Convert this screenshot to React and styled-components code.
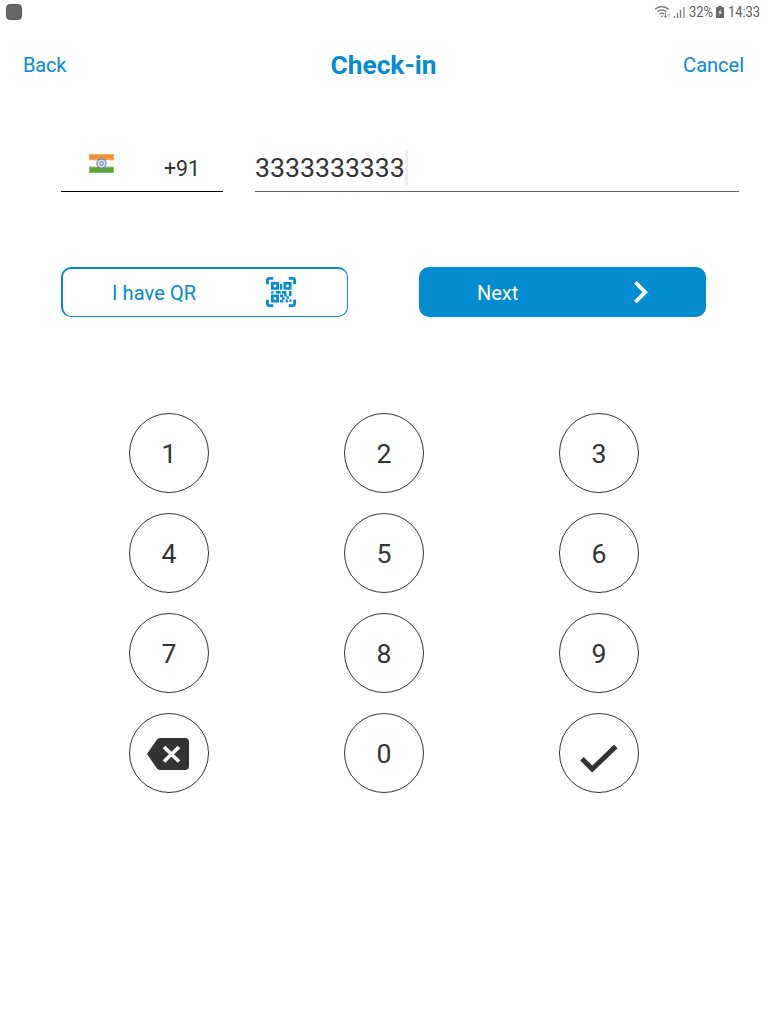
import React from "react";
import styled, { createGlobalStyle } from "styled-components";

const BLUE = "#038cd1";
const INK = "#333333";

const Global = createGlobalStyle`
  *, *::before, *::after { box-sizing: border-box; }
  body { margin: 0; background: #fff; font-family: Roboto, "Liberation Sans", sans-serif; }
  button { font: inherit; background: none; border: 0; padding: 0; margin: 0; }
  svg { display: block; flex: none; }
`;

const Screen = styled.div`
  width: 768px;
  height: 1024px;
  background: #fff;
  overflow: hidden;
`;

const StatusBar = styled.div`
  height: 24px;
  padding: 0 8px 0 6px;
  display: flex;
  align-items: center;
  justify-content: space-between;
`;

const AppBadge = styled.div`
  width: 16px;
  height: 16px;
  border-radius: 4px;
  background: #666;
  border: 1px solid #5a5a5a;
`;

const StatusItems = styled.div`
  display: flex;
  align-items: center;
  height: 24px;
`;

const StatusText = styled.span`
  width: ${(p) => p.$width}px;
  font-size: 15px;
  line-height: 24px;
  color: #5c5c5c;
  white-space: nowrap;
  transform: scaleX(0.86);
  transform-origin: 0 50%;
`;

const Header = styled.header`
  height: 82px;
  padding: 0 24px 0 23px;
  display: grid;
  grid-template-columns: 1fr auto 1fr;
  align-items: center;
  color: ${BLUE};
`;

const HeaderLink = styled.button`
  color: ${BLUE};
  font-size: 20px;
  line-height: 24px;
  letter-spacing: ${(p) => p.$tracking || 0}px;
  justify-self: ${(p) => p.$side};
`;

const Title = styled.h1`
  margin: 0;
  font-size: 26.3px;
  line-height: 30px;
  font-weight: 700;
`;

const PhoneRow = styled.div`
  margin: 40px 29px 0 61px;
  height: 46px;
  display: flex;
  gap: 32px;
  color: ${INK};
`;

const CountryField = styled.div`
  width: 162px;
  display: flex;
  align-items: flex-start;
  border-bottom: 1px solid #000;
  padding: 8px 0 0 28px;
`;

const CountryCode = styled.span`
  margin: 3px 0 0 50px;
  font-size: 21.33px;
  line-height: 24px;
`;

const NumberField = styled.div`
  flex: 1;
  display: flex;
  align-items: flex-start;
  border-bottom: 1px solid #666;
  padding-top: 3px;
`;

const NumberText = styled.span`
  font-size: 26.67px;
  line-height: 38px;
`;

const Cursor = styled.span`
  width: 3px;
  height: 36px;
  background: #ededed;
`;

const Actions = styled.div`
  margin: 75px 62px 0 61px;
  display: flex;
  justify-content: space-between;
`;

const ActionButton = styled.button`
  width: 287px;
  height: 50px;
  display: flex;
  align-items: center;
  border-radius: 10px;
  font-size: 20px;
  line-height: 24px;
  color: ${(p) => (p.$filled ? "#fff" : BLUE)};
  background: ${(p) => (p.$filled ? BLUE : "#fff")};
  border: ${(p) => (p.$filled ? "0" : `solid ${BLUE}`)};
  border-width: ${(p) => (p.$filled ? "0" : "2px 1px 1px 2px")};
`;

const ActionLabel = styled.span`
  width: ${(p) => p.$width}px;
  margin-left: ${(p) => p.$left}px;
  padding-top: 1px;
  text-align: left;
  white-space: nowrap;
  letter-spacing: ${(p) => p.$tracking || 0}px;
`;

const Keypad = styled.div`
  margin: 96px 129px 0;
  display: grid;
  grid-template-columns: repeat(3, 80px);
  justify-content: space-between;
  row-gap: 20px;
`;

const Key = styled.button`
  width: 80px;
  height: 80px;
  border: 1px solid ${INK};
  border-radius: 50%;
  display: flex;
  align-items: center;
  justify-content: center;
  color: ${INK};
  font-size: 26.67px;
  line-height: 32px;
  padding-top: 2px;
`;

const StatusIcons = () => (
  <svg width="34" height="24" viewBox="0 0 34 24" fill="none" stroke="#777">
    <path d="M0 9.2Q6.8 3.8 13.6 9.2M2.3 11.6q4.5-3.5 9 0M4.5 14q2.3-1.7 4.6 0" strokeWidth="1.4" />
    <path d="M5.4 15.7h2.8l-1.4 1.8z" fill="#777" stroke="none" />
    <path d="M10.4 12.6v4.6M8.8 15.6l1.6 1.7 1.6-1.7" strokeWidth="1" />
    <path d="M14.2 17v-3M13 15l1.2-1.2 1.2 1.2" strokeWidth=".8" stroke="#aaa" />
    <path d="M19.5 16v2M22.5 13v5M25.5 10v8" strokeWidth="1.3" />
    <path d="M29 7v11" strokeWidth="1.3" stroke="#888" />
  </svg>
);

const BatteryIcon = () => (
  <svg width="16" height="24" viewBox="0 0 16 24">
    <path d="M6.2 6h3.6v1.2H12V18H4V7.2h2.2z" fill="#666" />
    <path d="M9.1 8.8 6 12.8h1.9l-1.1 3.4 3.4-4.5H8.3z" fill="#ddd" />
  </svg>
);

const IndiaFlag = () => (
  <svg width="25" height="19" viewBox="0 0 25 19">
    <path d="M0 0h25v19H0z" fill="#fff" />
    <path d="M0 0h25v6.3H0z" fill="#ee9237" />
    <path d="M0 12.7h25V19H0z" fill="#5ca535" />
    <path d="M.5 .5h24v5.3H.5zM.5 13.2h24v5.3H.5z" fill="none" stroke="#fff" strokeOpacity=".25" />
    <circle cx="12.5" cy="9.5" r="4.6" fill="#dce3f1" stroke="#5f7fbe" strokeWidth="1.1" />
    <circle cx="12.5" cy="9.5" r="2.2" fill="#b5c5e5" stroke="#7892cb" strokeWidth=".9" />
    <circle cx="12.5" cy="9.5" r=".7" fill="#fff" />
  </svg>
);

const QrIcon = () => (
  <svg width="30" height="31" viewBox="0 0 30 31" fill={BLUE}>
    <path
      d="M1.4 7.2V3.4q0-2 2-2h3.8M22.8 1.4h3.8q2 0 2 2v3.8M28.6 22.8v3.8q0 2-2 2h-3.8M7.2 28.6H3.4q-2 0-2-2v-3.8"
      fill="none"
      stroke={BLUE}
      strokeWidth="2.8"
    />
    <path fillRule="evenodd" d="M5 5h8v7.8H5zM7.7 7.6v2.6h2.6V7.6zM17.5 5h8v7.8h-8zM20.2 7.6v2.6h2.6V7.6zM5 17.5h8v8H5zM7.7 20.2v2.6h2.6v-2.6z" />
    <path d="M13.9 7h2.4v5.8h-2.4zM5.2 14.2h2.3v2.2H5.2zM9.8 14h5v2.5h-5zM16 14h4.2v2.7H16zM23 14h2.5v3H23zM14 17.6h3.2v2.6H14zM18.2 16.6h2.4v3h-2.4zM20.6 19.3H23v2.5h-2.4zM23 17h2.5v2.3H23zM16.2 20.2h2.5v2.6h-2.5zM14 22.8h3.2v2.7H14zM19.6 22.6h2.3v2.9h-2.3zM23.3 22.6h2.2v2.4h-2.2z" />
  </svg>
);

const ChevronIcon = () => (
  <svg width="15" height="24" viewBox="0 0 15 24" fill="none" stroke="#fff" strokeWidth="3.8">
    <path d="M1.4 2.4 11.2 12.2 1.4 22" />
  </svg>
);

const BackspaceIcon = () => (
  <svg width="42" height="32" viewBox="0 0 42 32">
    <path d="M13 0h25q4 0 4 4v24q0 4-4 4H13q-2 0-3.2-1.7L0 16 9.8 1.7Q11 0 13 0z" fill={INK} />
    <path d="m17 9 15 14.5M32 9 17 23.5" stroke="#fff" strokeWidth="3.6" />
  </svg>
);

const CheckIcon = () => (
  <svg width="38" height="30" viewBox="0 0 38 30" fill="none" stroke={INK} strokeWidth="5">
    <path d="m2 14.7 10.2 10.4L35.8 2.4" />
  </svg>
);

const KeyGlyph = styled.span`
  display: flex;
  margin-top: ${(p) => p.$top}px;
  margin-left: ${(p) => p.$left || 0}px;
`;

export default function App() {
  return (
    <Screen>
      <Global />
      <StatusBar>
        <AppBadge />
        <StatusItems>
          <StatusIcons />
          <StatusText $width={23}>32%</StatusText>
          <BatteryIcon />
          <StatusText $width={32}>14:33</StatusText>
        </StatusItems>
      </StatusBar>
      <Header>
        <HeaderLink $side="start" $tracking={-0.2}>Back</HeaderLink>
        <Title>Check-in</Title>
        <HeaderLink $side="end">Cancel</HeaderLink>
      </Header>
      <PhoneRow>
        <CountryField>
          <IndiaFlag />
          <CountryCode>+91</CountryCode>
        </CountryField>
        <NumberField>
          <NumberText>3333333333</NumberText>
          <Cursor />
        </NumberField>
      </PhoneRow>
      <Actions>
        <ActionButton>
          <ActionLabel $left={49} $width={154} $tracking={0.1}>I have QR</ActionLabel>
          <QrIcon />
        </ActionButton>
        <ActionButton $filled>
          <ActionLabel $left={58} $width={157}>Next</ActionLabel>
          <ChevronIcon />
        </ActionButton>
      </Actions>
      <Keypad>
        {[1, 2, 3, 4, 5, 6, 7, 8, 9].map((n) => (
          <Key key={n}>{n}</Key>
        ))}
        <Key aria-label="Delete">
          <KeyGlyph $top={0} $left={-2}><BackspaceIcon /></KeyGlyph>
        </Key>
        <Key>0</Key>
        <Key aria-label="Confirm">
          <KeyGlyph $top={9}><CheckIcon /></KeyGlyph>
        </Key>
      </Keypad>
    </Screen>
  );
}
